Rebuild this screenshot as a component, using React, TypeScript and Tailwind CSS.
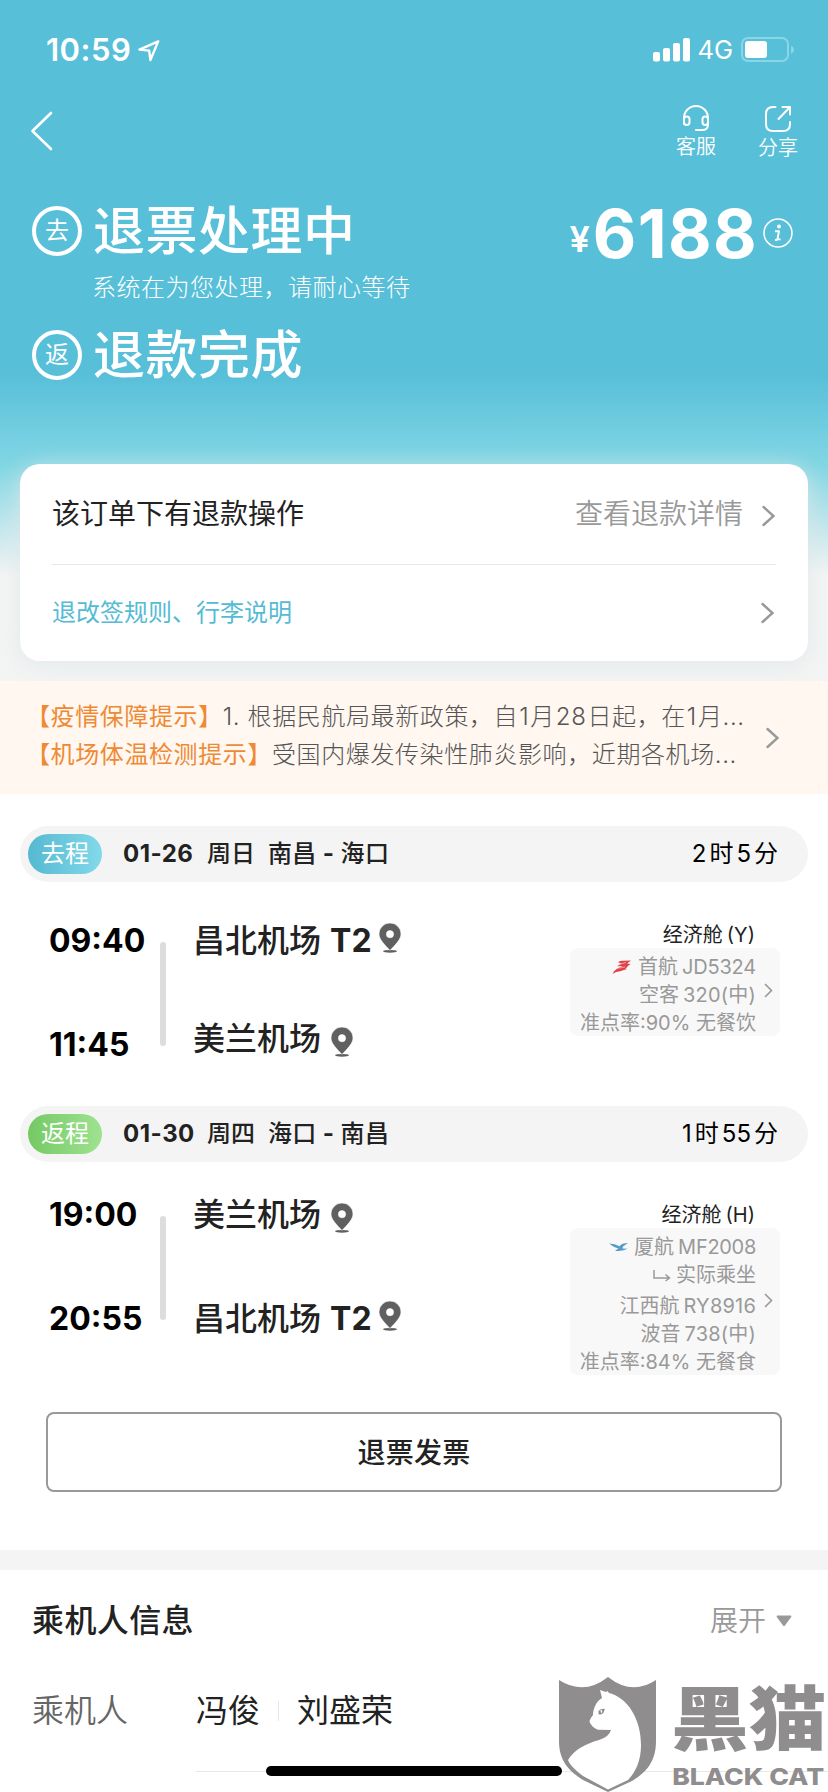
import type { ReactNode } from "react";

type Stop = {
  time: string;
  airport: string;
  terminal?: string;
};

type Flight = {
  tag: string;
  tagClass: string;
  date: string;
  weekday: string;
  from: string;
  to: string;
  duration: [string, string];
  stops: [Stop, Stop];
  timesClass: string;
  airportsClass: string;
  barClass: string;
  cabin: string;
  bodyClass: string;
  detailClass: string;
  details: ReactNode;
};

function BackIcon() {
  return (
    <svg width="24" height="42" viewBox="0 0 24 42" fill="none" stroke="#fff" strokeWidth="2.6" strokeLinecap="round" strokeLinejoin="round">
      <path d="M21 3 2.5 21 21 39" />
    </svg>
  );
}

function LocationIcon() {
  return (
    <svg width="22" height="22" viewBox="0 0 22 22" fill="none" stroke="#fff" strokeWidth="2.4" strokeLinejoin="round">
      <path d="M20.2 1.4 1.4 9.6 11.2 10.6 12.4 20Z" />
    </svg>
  );
}

function SignalIcon() {
  return (
    <svg width="38" height="24" viewBox="0 0 38 24" fill="#fff">
      <rect x="0" y="14" width="7" height="9.4" rx="2" />
      <rect x="10" y="10" width="7" height="13.4" rx="2" />
      <rect x="20" y="5" width="7" height="18.4" rx="2" />
      <rect x="30" y="0" width="7" height="23.4" rx="2" />
    </svg>
  );
}

function BatteryIcon() {
  return (
    <svg width="54" height="26" viewBox="0 0 54 26" fill="none">
      <rect x="1" y="1" width="46" height="23" rx="6" stroke="#8ad5e6" strokeWidth="2" />
      <rect x="4" y="4" width="22" height="17" rx="3" fill="#fff" />
      <path d="M50 9c2 .6 3 2 3 3.800s-1 3.200-3 3.800Z" fill="#8ad5e6" />
    </svg>
  );
}

function HeadsetIcon() {
  return (
    <svg width="28" height="28" viewBox="0 0 28 28" fill="none" stroke="#fff" strokeWidth="2" strokeLinecap="round">
      <path d="M2 20V14a12 12 0 0 1 24 0v6.500q0 5.500-5.500 5.500H14" />
      <rect x="2" y="12.500" width="5.500" height="8.500" rx="2.700" />
      <rect x="20.500" y="12.500" width="5.500" height="8.500" rx="2.700" />
    </svg>
  );
}

function ShareIcon() {
  return (
    <svg width="28" height="28" viewBox="0 0 28 28" fill="none" stroke="#fff" strokeWidth="2" strokeLinecap="round" strokeLinejoin="round">
      <path d="M11.500 2H9Q2 2 2 9v10q0 7 7 7h10q7 0 7-7v-2" />
      <path d="M18.500 2H26v7.500M26 2 14.500 14" />
    </svg>
  );
}

function InfoIcon() {
  return (
    <svg width="30" height="30" viewBox="0 0 30 30" fill="none">
      <circle cx="15" cy="15" r="14" stroke="#fff" strokeWidth="1.500" />
      <circle cx="16" cy="8.600" r="2" fill="#fff" />
      <path d="M12 13.200h4l-1.600 8.200h3.200M12 22h2.400" stroke="#fff" strokeWidth="1.900" strokeLinejoin="round" />
    </svg>
  );
}

function Chevron({ small = false }: { small?: boolean }) {
  return small ? (
    <svg width="9" height="15" viewBox="0 0 9 15" fill="none" stroke="#999" strokeWidth="1.600">
      <path d="m1 1 6.500 6.500L1 14" />
    </svg>
  ) : (
    <svg width="13" height="22" viewBox="0 0 13 22" fill="none" stroke="#999" strokeWidth="2.400" strokeLinecap="round">
      <path d="m1.500 2 10 9-10 9" />
    </svg>
  );
}

function PinIcon() {
  return (
    <svg width="22" height="30" viewBox="0 0 22 30" className="shrink-0" fill="#606060">
      <ellipse cx="11" cy="28.300" rx="7" ry="1.400" />
      <path
        fillRule="evenodd"
        stroke="#fff"
        strokeWidth=".6"
        d="M11 0a11 11 0 0 1 11 11c0 5.500-5.500 10.500-11 16.500C5.500 21.500 0 16.500 0 11A11 11 0 0 1 11 0Zm0 7.600a3.600 3.600 0 1 0 0 7.200 3.600 3.600 0 0 0 0-7.200Z"
      />
    </svg>
  );
}

function CapitalLogo() {
  return (
    <svg width="20" height="16" viewBox="0 0 20 16" fill="none">
      <path d="M6 3.200Q8 1.200 11 1.800L19 1.600 15 4.600l3.500.4-2 1.500-3 3.200 1.500.3-7 2.200Q4 12.400.5 15 2 11.500 5 9.800L10.500 7 5 7.200 9.500 4.600Z" fill="#e0424a" />
      <path d="m7 5.400 7-1.900M6 9.200l7-1.200" stroke="#f7c9cb" strokeWidth=".7" />
    </svg>
  );
}

function XiamenLogo() {
  return (
    <svg width="20" height="12" viewBox="0 0 20 12">
      <path d="M0 2.500Q6 2.600 10.500 5.200 13 2 19 2l-5 3.500-.5 2 5 .3Q14 10.500 6 9.700l3.500-2.200Q4 6 0 2.500Z" fill="#559bc8" />
    </svg>
  );
}

function TransferIcon() {
  return (
    <svg width="18" height="13" viewBox="0 0 18 13" fill="none" stroke="#999" strokeWidth="1.500">
      <path d="M1 1v8h15M12.500 5.500 16.500 9l-4 3" />
    </svg>
  );
}

function ShieldCat() {
  return (
    <svg width="98" height="116" viewBox="0 0 98 116">
      <path fill="#908d8e" d="M0 3q25 16 49-3 24 19 48 3v61c0 22-11 32-24 40L49 115 24 103C10 94 0 84 0 64Z" />
      <path fill="#fff" d="M41 13 47 15 48.500 14 50 16C69 21 82 42 82 68c0 15-5 27-13 35L49 112.500 24 99C17 94 11 88 9 83c6-10 17-16 31-20q10-3 12-10l-13-.3C34 51 31 47 30.500 44q1-3 3.500-6c.3-8 4-14 9-17Z" />
      <path fill="#908d8e" d="M39.500 34q3-3 6.500-2l-1.500 3.500q-2 3-5 1.500Z" />
      <path fill="#fff" d="M42 32.500q2 1 .8 3.500-2-.5-.8-3.500Z" />
    </svg>
  );
}

function StatusRow({ mark, title }: { mark: string; title: string }) {
  return (
    <div className="flex h-[52px] items-center">
      <div className="flex size-[50px] items-center justify-center rounded-full border-4 border-white text-[24px]">
        {mark}
      </div>
      <div className="ml-[11px] pt-px text-[52px] leading-[52px] font-medium tracking-[0.5px]">{title}</div>
    </div>
  );
}

function FlightCard({ flight }: { flight: Flight }) {
  return (
    <section>
      <div className="mx-5 flex h-14 items-center rounded-full bg-[#f4f4f4] pr-[30px] pl-2 text-[24px] leading-[30px]">
        <div className={`flex h-10 w-[74px] items-center justify-center rounded-full text-white ${flight.tagClass}`}>
          {flight.tag}
        </div>
        <div className="ml-[21px] w-[84px] font-bold tracking-[0.5px] text-[#222]">{flight.date}</div>
        <div className="w-[61px] font-medium text-[#222]">{flight.weekday}</div>
        <div className="flex font-medium tracking-[0.3px] text-[#222]">
          <span>{flight.from}</span>
          <span className="w-[24px] text-center font-bold">-</span>
          <span>{flight.to}</span>
        </div>
        <div className="ml-auto flex gap-[3px] text-black">
          <span>{flight.duration[0]}</span>
          <span>时</span>
          <span>{flight.duration[1]}</span>
          <span>分</span>
        </div>
      </div>

      <div className={`flex items-start pl-12 ${flight.bodyClass}`}>
        <div className={`flex w-28 flex-col gap-16 pl-px text-[32px] leading-10 font-bold text-black ${flight.timesClass}`}>
          <span>{flight.stops[0].time}</span>
          <span>{flight.stops[1].time}</span>
        </div>
        <div className={`h-[104px] w-[6px] rounded-full bg-[#ddd] ${flight.barClass}`} />
        <div className={`ml-[27px] flex flex-col text-[32px] leading-10 font-medium text-[#222] ${flight.airportsClass}`}>
          {flight.stops.map((stop) => (
            <div key={stop.airport} className="flex h-10 items-center whitespace-pre">
              <span>{stop.airport}</span>
              {stop.terminal ? (
                <>
                  <span className="ml-[9px] w-[49px] font-bold">{stop.terminal}</span>
                  <span className="-mt-[7px]">
                    <PinIcon />
                  </span>
                </>
              ) : (
                <span className="mt-[5px] ml-[10px]">
                  <PinIcon />
                </span>
              )}
            </div>
          ))}
        </div>

        <div className="mr-12 ml-auto flex flex-col pt-10 text-[20px]">
          <div className="mr-[25px] flex h-[26px] items-center justify-end gap-[4px] text-[#222]">
            <span>经济舱</span>
            <span>{flight.cabin}</span>
          </div>
          <div className={`flex w-[210px] items-center justify-end rounded-lg bg-[#f8f8f8] pr-[7px] text-[#999] ${flight.detailClass}`}>
            <div className="flex h-full flex-col items-end pt-[5px] leading-7 whitespace-nowrap">{flight.details}</div>
            <div className="-mt-[3px] ml-[8px]">
              <Chevron small />
            </div>
          </div>
        </div>
      </div>
    </section>
  );
}

const flights: Flight[] = [
  {
    tag: "去程",
    tagClass: "bg-linear-to-r from-[#54b9d1] to-[#82d9ea]",
    date: "01-26",
    weekday: "周日",
    from: "南昌",
    to: "海口",
    duration: ["2", "5"],
    stops: [
      { time: "09:40", airport: "昌北机场", terminal: "T2" },
      { time: "11:45", airport: "美兰机场" },
    ],
    timesClass: "pt-[39px]",
    airportsClass: "pt-[39px] gap-[58px]",
    barClass: "mt-[60px]",
    cabin: "(Y)",
    bodyClass: "h-[224px]",
    detailClass: "h-[88px]",
    details: (
      <>
        <div className="flex items-center">
          <CapitalLogo />
          <span className="ml-[6px]">首航</span>
          <span className="ml-[4px] tracking-[-0.2px]">JD5324</span>
        </div>
        <div className="flex">
          <span>空客</span>
          <span className="ml-[4px] tracking-[0.2px]">320(中)</span>
        </div>
        <div>准点率:90% 无餐饮</div>
      </>
    ),
  },
  {
    tag: "返程",
    tagClass: "bg-linear-to-r from-[#74c964] to-[#9fe291]",
    date: "01-30",
    weekday: "周四",
    from: "海口",
    to: "南昌",
    duration: ["1", "55"],
    stops: [
      { time: "19:00", airport: "美兰机场" },
      { time: "20:55", airport: "昌北机场", terminal: "T2" },
    ],
    timesClass: "pt-[33px]",
    airportsClass: "pt-[33px] gap-16",
    barClass: "mt-[54px]",
    cabin: "(H)",
    bodyClass: "h-[250px]",
    detailClass: "h-[147px]",
    details: (
      <>
        <div className="flex items-center">
          <XiamenLogo />
          <span className="ml-[5px]">厦航</span>
          <span className="ml-[4px] tracking-[-0.3px]">MF2008</span>
        </div>
        <div className="mb-[3px] flex items-center">
          <TransferIcon />
          <span className="ml-[5px]">实际乘坐</span>
        </div>
        <div className="flex">
          <span>江西航</span>
          <span className="ml-[4px] tracking-[0.2px]">RY8916</span>
        </div>
        <div className="flex">
          <span>波音</span>
          <span className="ml-[4px] tracking-[0.2px]">738(中)</span>
        </div>
        <div>准点率:84% 无餐食</div>
      </>
    ),
  },
];

export default function App() {
  return (
    <div className="relative h-[1792px] w-[828px] overflow-hidden bg-white font-['Inter','Noto_Sans_CJK_SC',sans-serif] text-[#222]">
      <header className="h-[681px] bg-[linear-gradient(180deg,#58bfd9_0px,#58bfd9_375px,#76d0e2_440px,#80d6e3_465px,#f4f4f4_575px,#f4f4f4_681px)] text-white">
        <div className="flex h-[100px] items-center pr-[33px] pl-[46px]">
          <span className="text-[31px] leading-10 font-semibold tracking-[0.5px]">10:59</span>
          <span className="mt-px ml-[7px]">
            <LocationIcon />
          </span>
          <div className="ml-auto flex items-center">
            <SignalIcon />
            <span className="ml-[7px] text-[25.5px]">4G</span>
            <span className="ml-[8px]">
              <BatteryIcon />
            </span>
          </div>
        </div>

        <div className="flex h-[105px] items-start justify-between pr-[30px] pl-[30px]">
          <div className="mt-[10px]">
            <BackIcon />
          </div>
          <div className="flex gap-[42px] text-[20px] leading-[26px] font-[350]">
            <div className="flex flex-col items-center pt-[4px]">
              <HeadsetIcon />
              <span className="mt-[2px]">客服</span>
            </div>
            <div className="flex flex-col items-center pt-[5px]">
              <ShareIcon />
              <span className="mt-[2px]">分享</span>
            </div>
          </div>
        </div>

        <div className="flex h-[259px] justify-between pr-[35px] pl-8">
          <div>
            <StatusRow mark="去" title="退票处理中" />
            <div className="mt-[15px] mb-[25px] ml-[60px] text-[24px] leading-[32px] font-light tracking-[0.5px]">
              系统在为您处理，请耐心等待
            </div>
            <StatusRow mark="返" title="退款完成" />
          </div>
          <div className="flex h-[58px] items-center">
            <span className="mt-[10px] text-[36px] font-semibold">¥</span>
            <span className="ml-[3px] text-[67px] leading-[60px] font-bold tracking-[1.4px]">6188</span>
            <span className="-mt-[2px] ml-[5px]">
              <InfoIcon />
            </span>
          </div>
        </div>

        <div className="mx-5 h-[197px] rounded-[20px] bg-white px-8 shadow-[0_4px_24px_rgba(222,232,233,0.85)]">
          <div className="flex h-[101px] items-center border-b border-[#e8e8e8] text-[28px]">
            <span className="text-[#222]">该订单下有退款操作</span>
            <span className="ml-auto font-[350] text-[#999]">查看退款详情</span>
            <span className="mt-[3px] mr-px ml-[19px]">
              <Chevron />
            </span>
          </div>
          <div className="flex h-[95px] items-center justify-between text-[24px] text-[#55bbd5]">
            <span>退改签规则、行李说明</span>
            <span className="mr-[2px]">
              <Chevron />
            </span>
          </div>
        </div>
      </header>

      <div className="flex h-[113px] items-center bg-[#fff7f0] pr-[49px] pl-[26px] text-[24px] leading-[38px] font-light tracking-[0.6px] text-[#555]">
        <div className="-mt-[4px] whitespace-nowrap">
          <p>
            <span className="font-normal text-[#ef8a34]">【疫情保障提示】</span>1. 根据民航局最新政策，自
            <span className="mx-px">1</span>月<span className="mx-px">28</span>日起，在
            <span className="mx-px">1</span>月...
          </p>
          <p>
            <span className="font-normal text-[#ef8a34]">【机场体温检测提示】</span>受国内爆发传染性肺炎影响，近期各机场...
          </p>
        </div>
        <div className="ml-auto">
          <Chevron />
        </div>
      </div>

      <main className="pt-8">
        {flights.map((flight) => (
          <FlightCard key={flight.date} flight={flight} />
        ))}
        <button
          type="button"
          className="mx-[46px] flex h-20 w-[736px] items-center justify-center rounded-lg border-2 border-[#999] pt-px text-[28px] font-medium tracking-[0.2px]"
        >
          退票发票
        </button>
      </main>

      <div className="mt-[58px] h-5 bg-[#f4f4f4]" />

      <section>
        <div className="flex h-[102px] items-center pr-9 pl-8">
          <h2 className="text-[32px] font-medium tracking-[0.4px]">乘机人信息</h2>
          <span className="ml-auto text-[28px] font-[350] text-[#999]">展开</span>
          <svg width="16" height="12" viewBox="0 0 16 12" className="ml-[10px]">
            <path d="M1.500.5h13q1.500 0 .7 1.500L9 10.500q-1 1.200-2 0L.8 2Q0 .5 1.500.5Z" fill="#999" />
          </svg>
        </div>
        <div className="flex h-[78px] items-center pl-8 text-[32px]">
          <span className="w-[164px] font-[350] text-[#666]">乘机人</span>
          <span>冯俊</span>
          <span className="mx-[18px] h-5 w-px bg-[#e8e8e8]" />
          <span>刘盛荣</span>
        </div>
        <div className="mt-[21px] ml-[196px] h-px bg-[#e8e8e8]" />
      </section>

      {/* home indicator */}
      <div className="absolute top-[1766px] left-[266px] h-[10px] w-[296px] rounded-full bg-black" />

      {/* watermark */}
      <div className="absolute top-[1677px] left-[559px] flex text-[#908d8e]">
        <ShieldCat />
        <div className="ml-[14px]">
          <div className="h-[86px] origin-left scale-x-[1.11] text-[70px] leading-[86px] font-black whitespace-nowrap">黑猫</div>
          <div className="origin-left scale-x-[1.13] pl-px text-[23.5px] leading-7 font-extrabold whitespace-nowrap">BLACK CAT</div>
        </div>
      </div>
    </div>
  );
}
